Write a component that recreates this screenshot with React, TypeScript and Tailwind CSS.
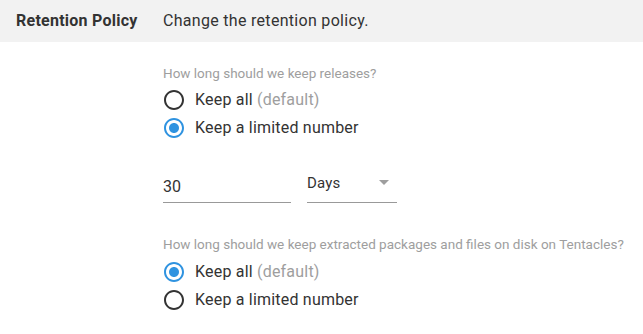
import React from "react";

const font = { fontFamily: "Roboto, 'Noto Sans', sans-serif" };

function Radio({ checked, label, muted }: { checked: boolean; label: string; muted?: string }) {
  return (
    <div className="flex h-[28px] items-center -ml-[1px]">
      <svg width="24" height="24" viewBox="0 0 24 24" className="shrink-0">
        <path
          fill={checked ? "#2f93e0" : "#333333"}
          d="M12 2C6.48 2 2 6.48 2 12s4.48 10 10 10 10-4.48 10-10S17.52 2 12 2zm0 18c-4.42 0-8-3.58-8-8s3.58-8 8-8 8 3.58 8 8-3.58 8-8 8z"
        />
        {checked && (
          <path fill="#2f93e0" d="M12 7c-2.76 0-5 2.24-5 5s2.24 5 5 5 5-2.24 5-5-2.24-5-5-5z" />
        )}
      </svg>
      <span className="ml-[9px] text-[16px] leading-[24px] tracking-[0.2px] text-[#333333]">
        {label}
        {muted && <span className="text-[#9e9e9e]"> {muted}</span>}
      </span>
    </div>
  );
}

export default function App() {
  return (
    <div className="w-[643px] h-[334px] bg-white overflow-hidden" style={font}>
      <div className="flex h-[42px] items-center bg-[#f2f2f2] pl-4">
        <div className="w-[147px] text-[16px] font-bold tracking-[0.25px] text-[#333333]">Retention Policy</div>
        <div className="text-[16px] tracking-[0.3px] text-[#333333]">Change the retention policy.</div>
      </div>
      <div className="pl-[163px]">
        <div className="mt-[23px] text-[13.5px] leading-[16px] text-[#9e9e9e]">
          How long should we keep releases?
        </div>
        <div className="mt-[5px]">
          <Radio checked={false} label="Keep all" muted="(default)" />
          <Radio checked={true} label="Keep a limited number" />
        </div>
        <div className="mt-[33px] flex gap-4">
          <div className="w-[128px] h-[28px] border-b border-[#999999] text-[16px] leading-[24px] text-[#333333]">
            30
          </div>
          <div className="relative w-[90px] h-[28px] border-b border-[#999999]">
            <div className="text-[15px] leading-[20px] tracking-[0.2px] text-[#333333] -mt-[2px]">Days</div>
            <div className="absolute right-[8px] top-[5px] w-0 h-0 border-l-[5px] border-r-[5px] border-t-[5px] border-l-transparent border-r-transparent border-t-[#9e9e9e]" />
          </div>
        </div>
        <div className="mt-[33px] text-[13.5px] leading-[16px] text-[#9e9e9e]">
          How long should we keep extracted packages and files on disk on Tentacles?
        </div>
        <div className="mt-[6px]">
          <Radio checked={true} label="Keep all" muted="(default)" />
          <Radio checked={false} label="Keep a limited number" />
        </div>
      </div>
    </div>
  );
}
